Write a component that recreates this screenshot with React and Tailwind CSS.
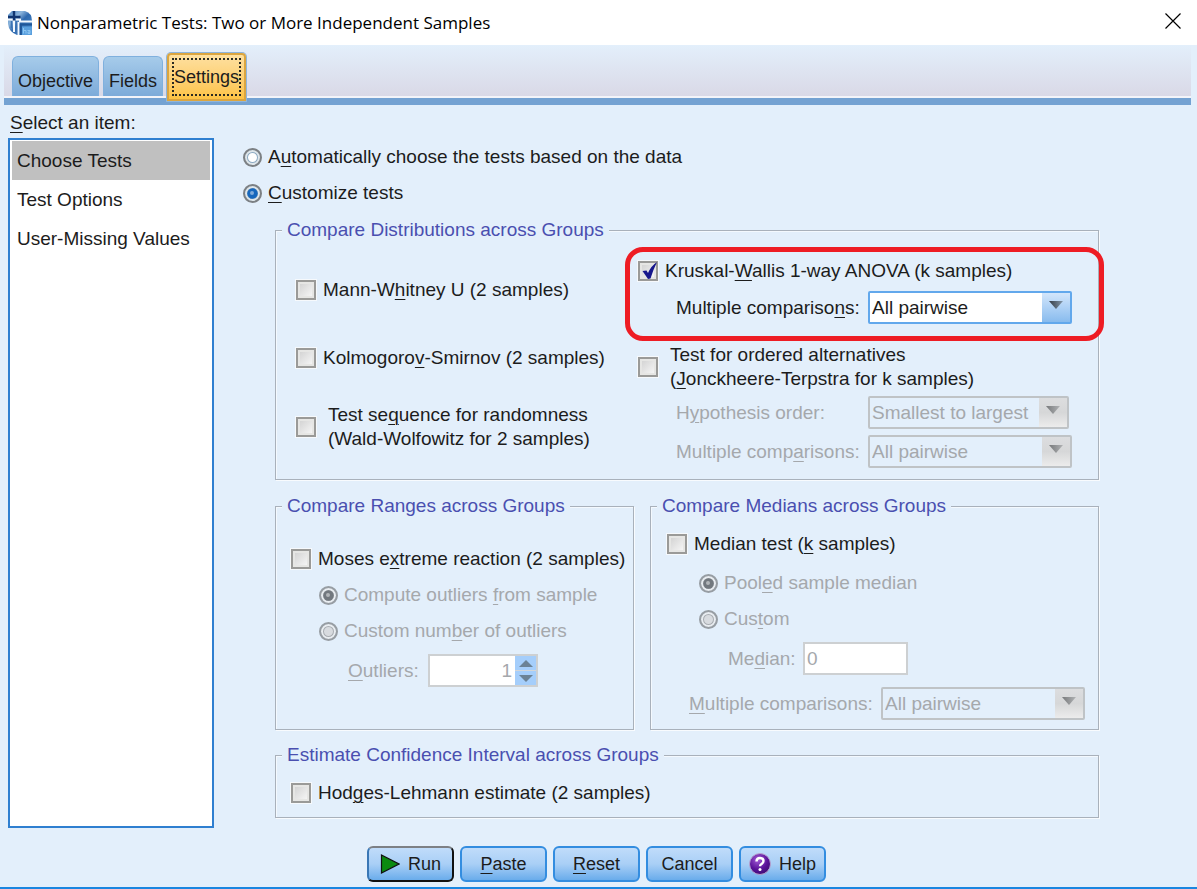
import React, { useId, useState } from "react";

function Key({ children }) {
  return <span className="underline decoration-1 underline-offset-3">{children}</span>;
}

function AppIcon() {
  return (
    <svg viewBox="0 0 24 24" className="size-6 shrink-0" aria-hidden="true">
      <defs>
        <linearGradient id="app-icon" x1="0" y1="0" x2="1" y2="1">
          <stop offset="0" stopColor="#4f86c2" />
          <stop offset="0.3" stopColor="#8db5dc" />
          <stop offset="0.5" stopColor="#2f69ae" />
          <stop offset="1" stopColor="#4d8fce" />
        </linearGradient>
      </defs>
      <path d="M4 0H17Q24 2 24 10V24H9Q1 21 0 13V4Z" fill="url(#app-icon)" />
      <path d="M0 8.500H5M8 8.500H13M11 10.500H24M6 9V21M10.500 11V24" stroke="#f2f8fe" strokeWidth="2" fill="none" />
      <path d="M3.500 10V17M8.300 10V23" stroke="#3a72b4" strokeWidth="1.500" fill="none" />
      <path d="M12 13.500H24M12.800 13V24" stroke="#1f5698" strokeWidth="2" fill="none" />
      <path d="M6 0V9.500M0 6H12.500" stroke="#0f3470" strokeWidth="2.400" fill="none" />
      <rect x="14" y="15.500" width="10" height="8.500" fill="#5ba0de" />
      <path d="M15.500 17V22.500M15.500 19.500H18V22.500M19.500 19.500H22V22.500H20V21H22" stroke="#8ec6f2" fill="none" />
    </svg>
  );
}

function CheckRow({ children, defaultChecked = false, className = "gap-[7px]" }) {
  return (
    <label className={`flex items-center ${className}`}>
      <span className="grid size-5 shrink-0">
        <input
          type="checkbox"
          defaultChecked={defaultChecked}
          className="peer col-start-1 row-start-1 size-5 appearance-none border-2 border-[#9a9a98] bg-linear-to-br from-[#cfcfcf] to-[#fafafa] shadow-[0_0_0_1px_#f6f9fc,inset_0_0_0_2px_#e6e6e4]"
        />
        <svg viewBox="0 0 20 20" className="pointer-events-none col-start-1 row-start-1 hidden size-5 peer-checked:block" aria-hidden="true">
          <path d="M4.500 10L8.500 9.500L10 12Q13 5 19 1Q15.500 8 12.500 17.500L10 18Z" fill="#17178c" />
        </svg>
      </span>
      <span>{children}</span>
    </label>
  );
}

function RadioRow({ children, name, defaultChecked = false, disabled = false }) {
  return (
    <label className={`flex items-center gap-1.5 ${disabled ? "text-[#a5a8ac]" : ""}`}>
      <span className="grid size-[19px] shrink-0">
        <input
          type="radio"
          name={name}
          defaultChecked={defaultChecked}
          disabled={disabled}
          className="peer col-start-1 row-start-1 size-[19px] appearance-none rounded-full border-2 border-[#7c8084] bg-white shadow-[inset_0_0_0_2px_#dfe6ea,inset_0_0_0_3px_#8eabc4] disabled:border-[#979da3] disabled:bg-[#d8dbdf] disabled:shadow-[inset_0_0_0_2px_#e9edf1,inset_0_0_0_3px_#a9adb2]"
        />
        <svg viewBox="0 0 19 19" className="pointer-events-none col-start-1 row-start-1 hidden size-[19px] text-[#1667bd] peer-checked:block peer-disabled:text-[#72787e]" aria-hidden="true">
          <circle cx="9.500" cy="9.500" r="5.200" fill="currentColor" />
          <circle cx="9" cy="9" r="2" fill="#fff" fillOpacity="0.450" />
        </svg>
      </span>
      <span>{children}</span>
    </label>
  );
}

function Combo({ id, value, disabled = false, className = "w-[204px]" }) {
  return (
    <span className={`relative flex h-[33px] shrink-0 ${className}`}>
      <select
        id={id}
        disabled={disabled}
        className="h-full w-full appearance-none rounded-xs border-2 border-[#62a8ec] bg-white pl-0.5 text-[#1c1c1c] disabled:border-[#bfc3c6] disabled:bg-[#e3effb] disabled:text-[#a5a8ac] disabled:opacity-100"
      >
        <option>{value}</option>
      </select>
      <span
        className={`pointer-events-none absolute inset-y-0.5 right-0.5 flex w-7 justify-center pt-2 ${
          disabled ? "bg-linear-to-b from-[#dcdddf] via-[#d6d7d8] to-[#ececec]" : "bg-linear-to-b from-[#d3e6fb] to-[#88bbee]"
        }`}
      >
        <svg viewBox="0 0 14 8" className="h-2 w-3.5" aria-hidden="true">
          <defs>
            <linearGradient id={`${id}-arrow`}>
              <stop offset="0" stopColor={disabled ? "#77797b" : "#333b45"} />
              <stop offset="1" stopColor={disabled ? "#b0b2b4" : "#8396a8"} />
            </linearGradient>
          </defs>
          <path d="M0 0H14L7 8Z" fill={`url(#${id}-arrow)`} />
        </svg>
      </span>
    </span>
  );
}

function ComboRow({ label, value, disabled = false, className = "", comboClass }) {
  const id = useId().replace(/[^a-zA-Z0-9]/g, "");
  return (
    <div className={`flex items-center ${className}`}>
      <label htmlFor={id} className={`w-48 shrink-0 whitespace-nowrap ${disabled ? "text-[#a5a8ac]" : ""}`}>
        {label}
      </label>
      <Combo id={id} value={value} disabled={disabled} className={comboClass} />
    </div>
  );
}

function Group({ title, className = "", children }) {
  return (
    <fieldset className={`min-w-0 border border-[#a9b1bb] shadow-[1px_1px_0_#f8fbfe,inset_1px_1px_0_#f4f9fe] ${className}`}>
      <legend className="ml-1.5 bg-[#e3effb] px-[5px] text-[#4a4fb0]">{title}</legend>
      {children}
    </fieldset>
  );
}

function Tab({ children, active, onClick }) {
  return (
    <button
      type="button"
      role="tab"
      aria-selected={active}
      onClick={onClick}
      className={
        active
          ? "relative -mb-[5px] h-12 rounded-t-sm border-2 border-[#dba53f] bg-linear-to-b from-[#fee0a0] to-[#fdc343] p-[3px] shadow-[0_0_0_1px_#8fb4da]"
          : "h-10 rounded-t-md border border-b-0 border-[#7fb0de] bg-linear-to-b from-[#a6cbea] to-[#7dabd9] px-[5px] pt-2"
      }
    >
      {active ? <span className="flex h-[38px] items-center border-2 border-dotted border-[#2a2a22]">{children}</span> : children}
    </button>
  );
}

function ActionButton({ children, primary = false }) {
  return (
    <button
      type="button"
      className={`flex h-9 w-[87px] items-center justify-center gap-2 rounded-md border-2 bg-linear-to-b from-[#c0dcfa] via-[#a9cff6] to-[#69aceb] text-lg/6 ${
        primary ? "border-t-[#7d8085] border-r-[#111] border-b-[#111] border-l-[#3a77b5]" : "border-[#338de0]"
      }`}
    >
      {children}
    </button>
  );
}

const tabs = ["Objective", "Fields", "Settings"];
const items = ["Choose Tests", "Test Options", "User-Missing Values"];

export default function App() {
  const [tab, setTab] = useState("Settings");
  const [item, setItem] = useState("Choose Tests");

  return (
    <div className="flex min-h-screen flex-col border-b-2 border-[#1a86e0] bg-[#e3effb] font-['Liberation_Sans',Arial,sans-serif] text-[19px] leading-6 text-[#1c1c1c]">
      <header className="flex h-[45px] items-center gap-[5px] bg-white pr-4 pl-2">
        <AppIcon />
        <h1 className="flex-1 font-['Open_Sans','Noto_Sans',sans-serif] text-[17px] text-black">
          Nonparametric Tests: Two or More Independent Samples
        </h1>
        <button type="button" aria-label="Close" className="pb-1">
          <svg viewBox="0 0 16 16" className="size-4" aria-hidden="true">
            <path d="M0.500 0.500L15.500 15.500M15.500 0.500L0.500 15.500" stroke="#000" strokeWidth="1.200" />
          </svg>
        </button>
      </header>

      <div role="tablist" className="mr-1.5 ml-1 flex h-15 items-end gap-1 border-b-7 border-[#74a2d2] bg-linear-to-b from-[#e3effb] to-[#d9d8e6] px-2 pb-0.5 text-lg/6 shadow-[inset_0_-2px_0_#f3f4f9]">
        {tabs.map((name) => (
          <Tab key={name} active={tab === name} onClick={() => setTab(name)}>
            {name}
          </Tab>
        ))}
      </div>

      <div className="flex flex-1 pr-[98px] pl-2">
        <nav className="flex w-[206px] shrink-0 flex-col pt-1.5" aria-labelledby="items-label">
          <p id="items-label" className="pl-0.5">
            <Key>S</Key>elect an item:
          </p>
          <ul className="mt-[3px] flex-1 border-2 border-[#2f7fd0] bg-white px-0.5 pt-px">
            {items.map((name) => (
              <li key={name}>
                <button
                  type="button"
                  onClick={() => setItem(name)}
                  className={`h-[39px] w-full px-[5px] text-left ${item === name ? "bg-[#c0c0c0]" : ""}`}
                >
                  {name}
                </button>
              </li>
            ))}
          </ul>
        </nav>

        <main className="min-w-0 flex-1 pt-10 pb-2.5 pl-[29px]">
          <div className="flex flex-col gap-3">
            <RadioRow name="mode">
              A<Key>u</Key>tomatically choose the tests based on the data
            </RadioRow>
            <RadioRow name="mode" defaultChecked>
              <Key>C</Key>ustomize tests
            </RadioRow>
          </div>

          <div className="mt-[13px] ml-8 flex flex-col gap-[13px]">
            <Group title="Compare Distributions across Groups">
              <div className="flex pb-[11px] pl-5">
                <div className="w-[342px] shrink-0 pt-9">
                  <CheckRow>
                    Mann-W<Key>h</Key>itney U (2 samples)
                  </CheckRow>
                  <CheckRow className="mt-11 gap-[7px]">
                    Kolmogoro<Key>v</Key>-Smirnov (2 samples)
                  </CheckRow>
                  <CheckRow className="mt-[33px] gap-3">
                    Test se<Key>q</Key>uence for randomness
                    <br />
                    (Wald-Wolfowitz for 2 samples)
                  </CheckRow>
                </div>
                <div className="flex-1 pt-[17px]">
                  <div className="relative">
                    <CheckRow defaultChecked className="gap-[7px]">
                      Kruskal-<Key>W</Key>allis 1-way ANOVA (k samples)
                    </CheckRow>
                    <ComboRow
                      className="mt-2 ml-[38px]"
                      label={<>Multiple compariso<Key>n</Key>s:</>}
                      value="All pairwise"
                    />
                    <div className="pointer-events-none absolute -top-3 -right-1.5 -bottom-[17px] -left-[13px] rounded-[18px] border-5 border-[#ee1c24]" />
                  </div>
                  <CheckRow className="mt-[19px] gap-3">
                    Test for ordered alternatives
                    <br />(<Key>J</Key>onckheere-Terpstra for k samples)
                  </CheckRow>
                  <ComboRow
                    className="mt-[5px] ml-[38px]"
                    disabled
                    label={<>H<Key>y</Key>pothesis order:</>}
                    value="Smallest to largest"
                    comboClass="w-[201px]"
                  />
                  <ComboRow
                    className="mt-1.5 ml-[38px]"
                    disabled
                    label={<>Multiple comp<Key>a</Key>risons:</>}
                    value="All pairwise"
                  />
                </div>
              </div>
            </Group>

            <div className="mt-px grid grid-cols-[359fr_449fr] gap-4">
              <Group title="Compare Ranges across Groups">
                <div className="pt-[29px] pl-[15px]">
                  <CheckRow>
                    Moses e<Key>x</Key>treme reaction (2 samples)
                  </CheckRow>
                  <div className="mt-3 ml-7 flex flex-col gap-3">
                    <RadioRow name="outliers" disabled defaultChecked>
                      Compute outliers <Key>f</Key>rom sample
                    </RadioRow>
                    <RadioRow name="outliers" disabled>
                      Custom num<Key>b</Key>er of outliers
                    </RadioRow>
                  </div>
                  <div className="mt-[11px] ml-[57px] flex items-center text-[#a5a8ac]">
                    <label htmlFor="outliers-count" className="w-20">
                      <Key>O</Key>utliers:
                    </label>
                    <span className="flex h-[33px] border-2 border-[#cdd0d2] bg-white">
                      <input id="outliers-count" disabled defaultValue="1" className="w-[85px] pr-[3px] text-right" />
                      <span className="flex w-[21px] flex-col gap-px bg-[#d3d6d9]">
                        <button type="button" disabled aria-label="Increase" className="flex flex-1 items-center justify-center bg-[#a5cefb]">
                          <svg viewBox="0 0 14 7" className="h-[7px] w-3.5" aria-hidden="true">
                            <path d="M0 7H14L7 0Z" fill="#6b8296" />
                          </svg>
                        </button>
                        <button type="button" disabled aria-label="Decrease" className="flex flex-1 items-center justify-center bg-[#a5cefb]">
                          <svg viewBox="0 0 14 7" className="h-[7px] w-3.5" aria-hidden="true">
                            <path d="M0 0H14L7 7Z" fill="#6b8296" />
                          </svg>
                        </button>
                      </span>
                    </span>
                  </div>
                </div>
              </Group>

              <Group title="Compare Medians across Groups">
                <div className="pt-3.5 pb-[9px] pl-4">
                  <CheckRow>
                    Median test (<Key>k</Key> samples)
                  </CheckRow>
                  <div className="mt-[15px] ml-8 flex flex-col gap-3">
                    <RadioRow name="median" disabled defaultChecked>
                      Pool<Key>e</Key>d sample median
                    </RadioRow>
                    <RadioRow name="median" disabled>
                      Cus<Key>t</Key>om
                    </RadioRow>
                  </div>
                  <div className="mt-[11px] ml-[61px] flex items-center text-[#a5a8ac]">
                    <label htmlFor="median-value" className="w-[75px]">
                      Me<Key>d</Key>ian:
                    </label>
                    <input
                      id="median-value"
                      disabled
                      defaultValue="0"
                      className="h-[33px] w-[105px] border-2 border-[#cdd0d2] bg-white px-0.5"
                    />
                  </div>
                  <ComboRow
                    className="mt-3 ml-[22px]"
                    disabled
                    label={<><Key>M</Key>ultiple comparisons:</>}
                    value="All pairwise"
                  />
                </div>
              </Group>
            </div>

            <Group title="Estimate Confidence Interval across Groups">
              <div className="pt-3.5 pb-3 pl-[15px]">
                <CheckRow>
                  Hod<Key>g</Key>es-Lehmann estimate (2 samples)
                </CheckRow>
              </div>
            </Group>
          </div>
        </main>
      </div>

      <footer className="flex justify-center gap-1.5 pt-[18px] pr-1 pb-[5px]">
        <ActionButton primary>
          <svg viewBox="0 0 20 20" className="size-5" aria-hidden="true">
            <path d="M1.500 1L19 10L1.500 19Z" fill="#0b8a10" stroke="#111" strokeWidth="1.200" />
          </svg>
          Run
        </ActionButton>
        <ActionButton>
          <span><Key>P</Key>aste</span>
        </ActionButton>
        <ActionButton>
          <span><Key>R</Key>eset</span>
        </ActionButton>
        <ActionButton>Cancel</ActionButton>
        <ActionButton>
          <svg viewBox="0 0 22 22" className="size-[22px] shrink-0" aria-hidden="true">
            <defs>
              <radialGradient id="help-ball" cx="0.400" cy="0.300" r="0.750">
                <stop offset="0" stopColor="#a45cd8" />
                <stop offset="0.600" stopColor="#5a1399" />
                <stop offset="1" stopColor="#3c0a70" />
              </radialGradient>
            </defs>
            <circle cx="11" cy="11" r="10.500" fill="url(#help-ball)" stroke="#b7a3cf" />
            <path d="M7.500 8.500Q7.500 5 11 5Q14.500 5 14.500 8Q14.500 9.800 12.500 11Q11 12 11 13.200" fill="none" stroke="#fff" strokeWidth="2.400" />
            <circle cx="11" cy="16.500" r="1.500" fill="#fff" />
          </svg>
          Help
        </ActionButton>
      </footer>
    </div>
  );
}
